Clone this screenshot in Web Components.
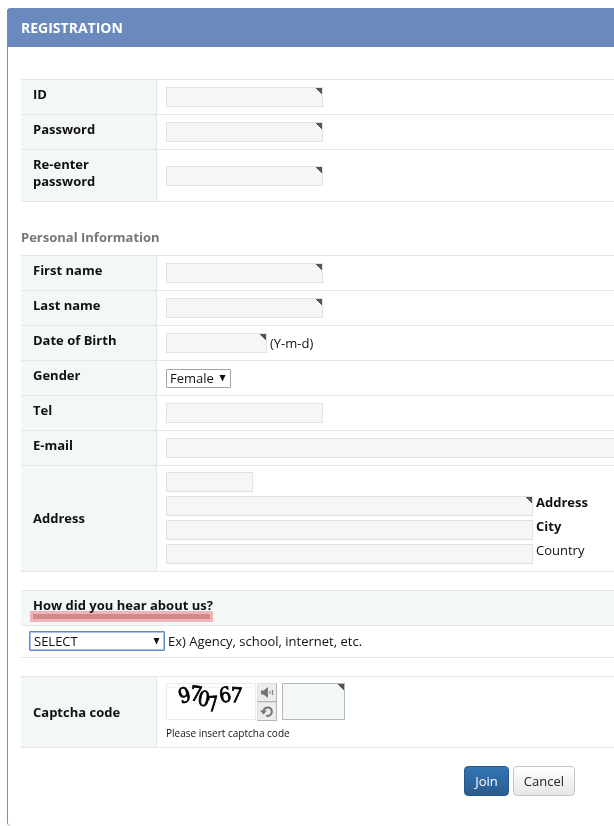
<!DOCTYPE html>
<html lang="en">
<head>
<meta charset="utf-8">
<meta name="viewport" content="width=device-width, initial-scale=1">
<title>Registration</title>
<style>
  body {
    margin: 0;
    background: #fff;
    color: #111;
    font: 13px/17px "Open Sans", "Noto Sans", sans-serif;
  }
</style>
</head>
<body>
<reg-panel heading="Registration">
  <form-section>
    <text-row label="ID" name="id" required></text-row>
    <text-row label="Password" name="password" type="password" required></text-row>
    <text-row label="Re-enter password" name="password2" type="password" required></text-row>
  </form-section>
  <form-section heading="Personal Information">
    <text-row label="First name" name="first" required></text-row>
    <text-row label="Last name" name="last" required></text-row>
    <text-row label="Date of Birth" name="birth" size="short" hint="(Y-m-d)" required></text-row>
    <select-row label="Gender" name="gender" options="Female,Male"></select-row>
    <text-row label="Tel" name="tel" type="tel"></text-row>
    <text-row label="E-mail" name="email" type="email" size="full"></text-row>
    <address-row></address-row>
  </form-section>
  <form-section>
    <source-question label="How did you hear about us?" hint="Ex) Agency, school, internet, etc."></source-question>
  </form-section>
  <form-section>
    <captcha-row></captcha-row>
  </form-section>
  <push-button slot="actions" kind="primary">Join</push-button>
  <push-button slot="actions">Cancel</push-button>
</reg-panel>

<script>
const SHARED = `
  *, *::before { box-sizing: border-box; }
  :host { display: block; }
  .row {
    display: grid;
    grid-template-columns: 136px minmax(0, 1fr);
    border-bottom: 1px solid #e2e6e8;
  }
  .name {
    display: flex;
    align-items: center;
    background: #f3f7f8;
    border-right: 1px solid #e2e6e8;
    padding: 6px 32px 11px 12px;
    font-weight: 700;
  }
  .name.tall { padding-block: 6px; }
  .value {
    display: flex;
    align-items: center;
    gap: 3px;
    padding-left: 9px;
    min-width: 0;
  }
  input {
    display: block;
    width: 157px;
    height: 20px;
    min-width: 0;
    margin: 0;
    padding: 0 6px;
    border: 1px solid #e2e2e2;
    border-radius: 0;
    background: #f6f6f6;
    font: inherit;
    color: inherit;
  }
  input[required] {
    background: linear-gradient(to bottom left, #555 50%, transparent 54%) right 0 top 0 / 6px 6px no-repeat #f6f6f6;
  }
  .pick { display: inline-grid; align-items: center; }
  .pick select {
    grid-area: 1 / 1;
    appearance: none;
    height: 19px;
    margin: 0;
    padding: 0 16px 0 3px;
    border: 1px solid #a3a3a3;
    border-radius: 1px;
    background: #fff;
    font: inherit;
    line-height: 17px;
    color: #111;
  }
  .pick svg { grid-area: 1 / 1; justify-self: end; margin-right: 5px; pointer-events: none; }
`;
const ARROW = `<svg width="7" height="7" viewBox="0 0 7 7" aria-hidden="true"><path d="M0.500 0h6L3.500 6.500z" fill="#111"/></svg>`;

class Part extends HTMLElement {
  constructor() {
    super();
    this.attachShadow({ mode: "open" });
  }
  connectedCallback() {
    this.shadowRoot.innerHTML = `<style>${SHARED}${this.css()}</style>${this.markup()}`;
  }
  attr(name, fallback = "") { return this.getAttribute(name) ?? fallback; }
  css() { return ""; }
  markup() { return ""; }
}

customElements.define("reg-panel", class extends Part {
  css() { return `
    :host { padding: 8px 0 0 7px; }
    section { border-left: 1px solid #7b8fae; border-radius: 4px 0 0 4px; min-height: calc(100vh - 10px); }
    h1 {
      margin: 0 0 0 -1px; padding: 10px 14px 10px; border-radius: 4px 0 0 0;
      background: #6a8abe; color: #fff;
      font-size: 14px; line-height: 19px; text-transform: uppercase;
    }
    form { display: grid; gap: 18px; padding: 32px 0 30px 13px; }
    footer { display: flex; justify-content: flex-end; gap: 4px; padding-right: 39px; }
  `; }
  markup() { return `
    <section>
      <h1>${this.attr("heading")}</h1>
      <form onsubmit="return false"><slot></slot><footer><slot name="actions"></slot></footer></form>
    </section>
  `; }
});

customElements.define("form-section", class extends Part {
  css() { return `
    h2 { margin: 0; padding: 9px 0; color: #777; font-size: 13px; line-height: 17px; }
    .rows { border-top: 1px solid #e2e6e8; }
  `; }
  markup() {
    const h = this.attr("heading");
    return `${h ? `<h2>${h}</h2>` : ""}<div class="rows"><slot></slot></div>`;
  }
});

customElements.define("text-row", class extends Part {
  css() { return `
    input.short { width: 101px; }
    input.full { width: 100%; border-right: 0; }
  `; }
  markup() {
    const req = this.hasAttribute("required") ? "required" : "";
    const hint = this.attr("hint");
    return `<div class="row">
      <label class="name" for="f">${this.attr("label")}</label>
      <div class="value">
        <input id="f" class="${this.attr("size")}" type="${this.attr("type", "text")}" name="${this.attr("name")}" ${req}>
        ${hint ? `<span>${hint}</span>` : ""}
      </div>
    </div>`;
  }
});

customElements.define("select-row", class extends Part {
  markup() { return `<div class="row">
    <label class="name" for="f">${this.attr("label")}</label>
    <div class="value"><span class="pick">
      <select id="f" name="${this.attr("name")}">
        ${this.attr("options").split(",").map(o => `<option>${o}</option>`).join("")}
      </select>${ARROW}
    </span></div>
  </div>`; }
});

customElements.define("address-row", class extends Part {
  css() { return `
    .value { flex-direction: column; align-items: stretch; gap: 4px; padding-block: 6px 7px; }
    .line { display: flex; align-items: flex-start; gap: 3px; }
    .line input { flex: 0 1 367px; }
    .line label { flex: none; line-height: 12px; }
    .zip { width: 87px; }
    b { font-weight: 700; }
  `; }
  markup() { return `<div class="row" role="group" aria-labelledby="g">
    <span class="name tall" id="g">Address</span>
    <div class="value">
      <input class="zip" name="zip" aria-label="Postal code">
      <div class="line"><input id="a" name="street" required><label for="a"><b>Address</b></label></div>
      <div class="line"><input id="c" name="city"><label for="c"><b>City</b></label></div>
      <div class="line"><input id="n" name="country"><label for="n">Country</label></div>
    </div>
  </div>`; }
});

customElements.define("source-question", class extends Part {
  css() { return `
    .ask { background: #f3f7f8; border-bottom: 1px solid #e2e6e8; padding: 6px 12px 11px; font-weight: 700; }
    .ask label { position: relative; display: inline-block; }
    .ask label::after {
      content: ""; position: absolute; inset: 14px 0 -8px -3px;
      background: #e08a8d; border: 3px solid #fbbcbe; mix-blend-mode: multiply;
    }
    .answer { display: flex; align-items: center; gap: 3px; padding: 5px 8px 6px; border-bottom: 1px solid #e2e6e8; }
    .pick select { width: 136px; height: 20px; border: 1px solid #5f87c4; box-shadow: inset 0 0 0 1px #a9c3e8; padding-left: 4px; }
  `; }
  markup() { return `
    <div class="ask"><label for="f">${this.attr("label")}</label></div>
    <div class="answer">
      <span class="pick"><select id="f" name="source"><option>SELECT</option><option>Agency</option><option>School</option><option>Internet</option></select>${ARROW}</span>
      <span>${this.attr("hint")}</span>
    </div>`; }
});

customElements.define("captcha-row", class extends Part {
  css() { return `
    .value { flex-direction: column; align-items: flex-start; gap: 4px; padding-block: 6px; }
    .code { display: flex; align-items: flex-start; }
    .pic { display: block; border: 1px solid #ebebeb; overflow: visible; }
    .tools { display: grid; gap: 0; margin: 0 5px 0 1px; }
    button {
      display: grid; place-items: center; width: 20px; height: 19px; padding: 0;
      border: 1px solid; border-color: #ddd #b4b4b4 #b4b4b4 #ddd; background: #ececec;
    }
    input, input[required] { width: 63px; height: 37px; border-color: #b4b9bb; background-color: #f4f7f7; }
    .note { font-size: 10px; line-height: 16px; }
  `; }
  markup() { return `<div class="row">
    <label class="name tall" for="f">Captcha code</label>
    <div class="value">
      <div class="code">
        <svg class="pic" width="90" height="37" viewBox="0 0 90 37" role="img" aria-label="Captcha image">
          <path d="M0 3.500h90" stroke="#ececec"/>
          <text x="13 22 30 41 55 65" y="21 17 22 29 20 19" rotate="-16 8 10 -4 -10 4"
            font-family="DejaVu Serif Condensed, DejaVu Serif, serif" font-size="22" fill="#000" stroke="#000" stroke-width=".8">970767</text>
        </svg>
        <div class="tools">
          <button type="button" aria-label="Play audio"><svg width="14" height="13" viewBox="0 0 14 13"><path d="M1 4.500h2.500L8 1v11L3.500 8.500H1z" fill="#70777b"/><path d="M10 5v3M12.500 4v5" stroke="#858b8f" stroke-width="1.200" fill="none"/></svg></button>
          <button type="button" aria-label="New code"><svg width="14" height="13" viewBox="0 0 14 13"><path d="M3.500 6a4.200 4.200 0 1 1 2.700 4.600" fill="none" stroke="#70777b" stroke-width="2"/><path d="M0 5.500h7L3.500 9.500z" fill="#70777b"/></svg></button>
        </div>
        <input id="f" name="captcha" required>
      </div>
      <span class="note">Please insert captcha code</span>
    </div>
  </div>`; }
});

customElements.define("push-button", class extends Part {
  css() { return `
    button {
      display: block; height: 30px; padding: 0 10px; border: 1px solid #c4c4c4; border-radius: 4px;
      background: linear-gradient(#fff, #e6e6e6); color: #222; font: inherit; line-height: 26px;
    }
    :host([kind="primary"]) button { border-color: #26598c; background: linear-gradient(#3276b5, #2a5c8e); color: #fff; }
  `; }
  markup() {
    const type = this.attr("kind") === "primary" ? "submit" : "button";
    return `<button type="${type}"><slot></slot></button>`;
  }
});
</script>
</body>
</html>
